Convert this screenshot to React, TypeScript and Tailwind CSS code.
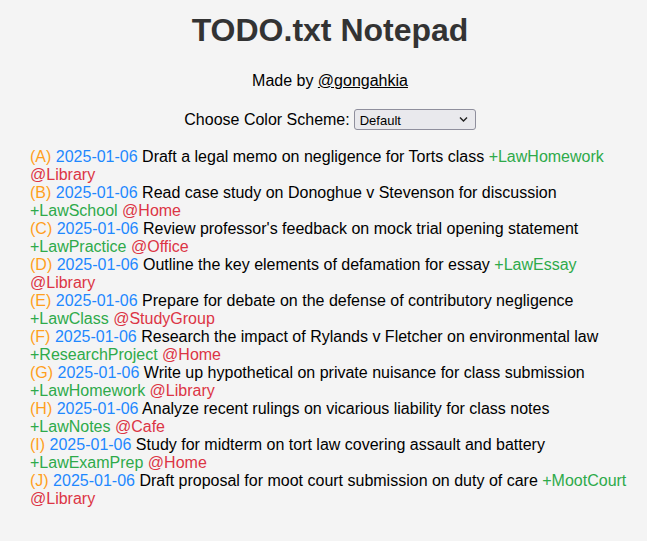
import React from 'react';

type Todo = {
  pri: string;
  date: string;
  text: string;
  project: string;
  context: string;
};

const todos: Todo[] = [
  { pri: 'A', date: '2025-01-06', text: 'Draft a legal memo on negligence for Torts class', project: 'LawHomework', context: 'Library' },
  { pri: 'B', date: '2025-01-06', text: 'Read case study on Donoghue v Stevenson for discussion', project: 'LawSchool', context: 'Home' },
  { pri: 'C', date: '2025-01-06', text: "Review professor's feedback on mock trial opening statement", project: 'LawPractice', context: 'Office' },
  { pri: 'D', date: '2025-01-06', text: 'Outline the key elements of defamation for essay', project: 'LawEssay', context: 'Library' },
  { pri: 'E', date: '2025-01-06', text: 'Prepare for debate on the defense of contributory negligence', project: 'LawClass', context: 'StudyGroup' },
  { pri: 'F', date: '2025-01-06', text: 'Research the impact of Rylands v Fletcher on environmental law', project: 'ResearchProject', context: 'Home' },
  { pri: 'G', date: '2025-01-06', text: 'Write up hypothetical on private nuisance for class submission', project: 'LawHomework', context: 'Library' },
  { pri: 'H', date: '2025-01-06', text: 'Analyze recent rulings on vicarious liability for class notes', project: 'LawNotes', context: 'Cafe' },
  { pri: 'I', date: '2025-01-06', text: 'Study for midterm on tort law covering assault and battery', project: 'LawExamPrep', context: 'Home' },
  { pri: 'J', date: '2025-01-06', text: 'Draft proposal for moot court submission on duty of care', project: 'MootCourt', context: 'Library' },
];

const App: React.FC = () => {
  return (
    <div
      className="min-h-[541px] w-full bg-[#f4f4f4] text-black pt-[12px] pl-[30px] pr-[17px]"
      style={{ fontFamily: '"Liberation Sans", Arial, sans-serif' }}
    >
      <h1 className="text-center text-[32px] font-bold leading-[37px] text-[#333333]">
        TODO.txt Notepad
      </h1>

      <p className="mt-[23px] text-center text-[16px] leading-[18px]">
        Made by <a className="underline text-black">@gongahkia</a>
      </p>

      <div className="mt-[19px] flex items-center justify-center gap-[4px] text-[16px] leading-[18px]">
        <span>Choose Color Scheme:</span>
        <div className="relative w-[122px] h-[21px] rounded-[3px] border border-[#8f8f9d] bg-[#e9e9ed]">
          <span className="absolute left-[5px] top-[3px] text-[13px] leading-[15px] text-black">Default</span>
          <svg className="absolute right-[7px] top-[6px]" width="9" height="7" viewBox="0 0 9 7" fill="none">
            <path d="M1 1.5 L4.5 5 L8 1.5" stroke="#222" strokeWidth="1.4" />
          </svg>
        </div>
      </div>

      <ul className="mt-[18px] w-[600px] text-[16px] leading-[18px]">
        {todos.map((t) => (
          <li key={t.pri}>
            <span className="text-[#ff9f1c]">({t.pri})</span>{' '}
            <span className="text-[#1e88ff]">{t.date}</span>{' '}
            <span>{t.text}</span>{' '}
            <span className="text-[#2eaa4a]">+{t.project}</span>{' '}
            <span className="text-[#dc3545]">@{t.context}</span>
          </li>
        ))}
      </ul>
    </div>
  );
};

export default App;
